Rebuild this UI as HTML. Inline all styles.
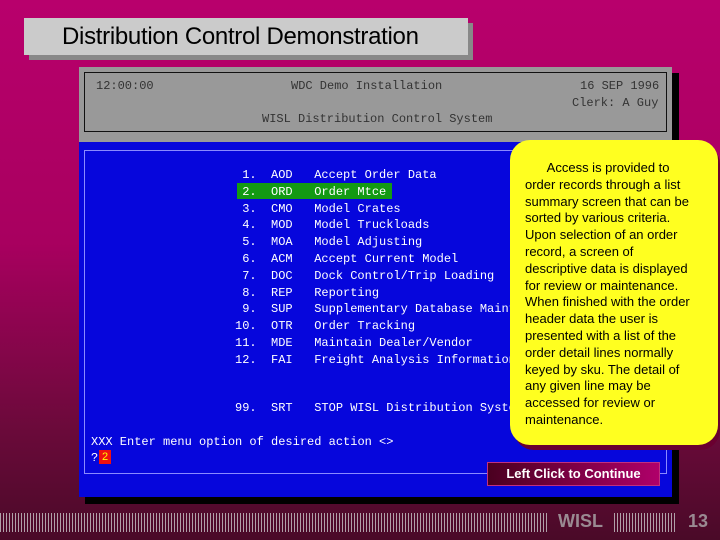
<!DOCTYPE html><html><head><style>
body{margin:0;width:720px;height:540px;overflow:hidden;background:linear-gradient(#b8006c 0%,#a8005f 45%,#6a0a3a 80%,#4a0a28 100%);font-family:"Liberation Sans",sans-serif;position:relative}
.a{position:absolute}
.m{font-family:"Liberation Mono",monospace;font-size:12px;white-space:pre;position:absolute}
</style></head><body>
<div class="a" style="left:29px;top:23px;width:444px;height:37px;background:#888"></div>
<div class="a" style="left:24px;top:18px;width:444px;height:37px;background:#cbcbcb"></div>
<div class="a" style="left:62px;top:23px;font-size:24px;color:#000;letter-spacing:-0.3px">Distribution Control Demonstration</div>
<div class="a" style="left:85px;top:73px;width:594px;height:431px;background:#000"></div>
<div class="a" style="left:79px;top:67px;width:593px;height:75px;background:#999"></div>
<div class="a" style="left:84px;top:72px;width:581px;height:58px;border:1px solid #111"></div>
<div class="a" style="left:79px;top:142px;width:593px;height:355px;background:#0606dc"></div>
<div class="a" style="left:84px;top:150px;width:581px;height:322px;border:1px solid #8a8aff"></div>
<div class="m" style="left:96px;top:79px;color:#333">12:00:00</div>
<div class="m" style="left:291px;top:79px;color:#333">WDC Demo Installation</div>
<div class="m" style="left:580px;top:79px;color:#333">16 SEP 1996</div>
<div class="m" style="left:572px;top:96px;color:#333">Clerk: A Guy</div>
<div class="m" style="left:262px;top:112px;color:#333">WISL Distribution Control System</div>
<div class="a" style="left:237px;top:183px;width:155px;height:16px;background:#139a13"></div>
<div class="m" style="left:235px;top:167px;color:#fff;line-height:16.8px"> 1.  AOD   Accept Order Data
 2.  ORD   Order Mtce
 3.  CMO   Model Crates
 4.  MOD   Model Truckloads
 5.  MOA   Model Adjusting
 6.  ACM   Accept Current Model
 7.  DOC   Dock Control/Trip Loading
 8.  REP   Reporting
 9.  SUP   Supplementary Database Maint
10.  OTR   Order Tracking
11.  MDE   Maintain Dealer/Vendor
12.  FAI   Freight Analysis Information</div>
<div class="m" style="left:235px;top:401px;color:#fff">99.  SRT   STOP WISL Distribution System</div>
<div class="m" style="left:91px;top:435px;color:#fff">XXX Enter menu option of desired action &lt;&gt;</div>
<div class="m" style="left:91px;top:451px;color:#fff">?</div>
<div class="a" style="left:99px;top:450px;width:12px;height:14px;background:#f01010;color:#ff0;font-size:11px;text-align:center;line-height:14px">2</div>
<div class="a" style="left:514px;top:144px;width:206px;height:306px;background:#6a0030;border-radius:20px"></div>
<div class="a" style="left:510px;top:140px;width:208px;height:305px;background:#ffff20;border-radius:20px"></div>
<div class="a" style="left:525px;top:160px;width:190px;font-size:13px;line-height:16.8px;color:#000;white-space:nowrap">&nbsp;&nbsp;&nbsp;&nbsp;&nbsp;&nbsp;Access is provided to<br>order records through a list<br>summary screen that can be<br>sorted by various criteria.<br>Upon selection of an order<br>record, a screen of<br>descriptive data is displayed<br>for review or maintenance.<br>When finished with the order<br>header data the user is<br>presented with a list of the<br>order detail lines normally<br>keyed by sku. The detail of<br>any given line may be<br>accessed for review or<br>maintenance.</div>
<div class="a" style="left:487px;top:462px;width:171px;height:22px;background:linear-gradient(90deg,#4a0020,#b0006a);border:1px solid #c03080;color:#fff;font-weight:bold;font-size:13px;text-align:center;line-height:22px">Left Click to Continue</div>
<div class="a" style="left:0;top:513px;width:548px;height:19px;background:repeating-linear-gradient(90deg,#b0a0a8 0 1px,transparent 1px 3px)"></div>
<div class="a" style="left:558px;top:511px;font-size:18px;font-weight:bold;color:#9a8a92">WISL</div>
<div class="a" style="left:614px;top:513px;width:62px;height:19px;background:repeating-linear-gradient(90deg,#b0a0a8 0 1px,transparent 1px 3px)"></div>
<div class="a" style="left:688px;top:511px;font-size:18px;font-weight:bold;color:#9a8a92">13</div>
</body></html>
